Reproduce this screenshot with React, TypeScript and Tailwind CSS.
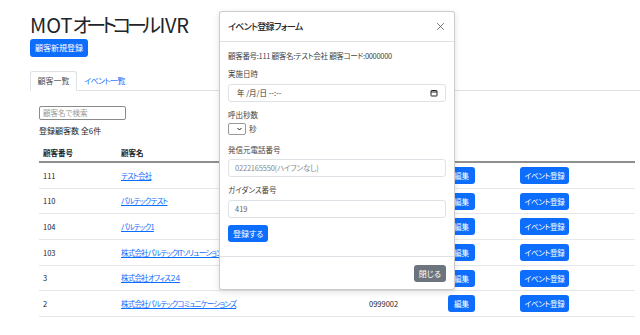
import React from 'react';

interface Customer {
  no: string;
  name: string;
  code: string;
}

const customers: Customer[] = [
  { no: '111', name: 'テスト会社', code: '0000000' },
  { no: '110', name: 'パルテックテスト', code: '0000110' },
  { no: '104', name: 'パルテック1', code: '0000104' },
  { no: '103', name: '株式会社パルテックITソリューションズ', code: '0999003' },
  { no: '3', name: '株式会社オフィス２４', code: '0000003' },
  { no: '2', name: '株式会社パルテックコミュニケーションズ', code: '0999002' },
];

const font = "font-['Noto_Sans_CJK_JP','Noto_Sans',sans-serif] [font-feature-settings:'palt']";

const EventModal: React.FC = () => (
  <div className="absolute left-[219px] top-[11px] w-[236px] h-[279px] bg-white border border-black/20 rounded-[3px] shadow-[0_2px_6px_rgba(0,0,0,0.12)] flex flex-col text-[#212529]">
    {/* header */}
    <div className="h-[30px] shrink-0 px-[8px] flex items-center justify-between border-b border-[#dee2e6]">
      <span className="text-[9px] font-medium tracking-[-0.7px]">イベント登録フォーム</span>
      <svg className="w-[9px] h-[9px] mr-[1px]" viewBox="0 0 16 16" fill="none" stroke="#555" strokeWidth={1.4}>
        <path d="M2 2l12 12M14 2L2 14" />
      </svg>
    </div>
    {/* body */}
    <div className="flex-1 px-[8px] pt-[8px] flex flex-col text-[7.5px] leading-[12px] text-[#444]">
      <p className="tracking-[-0.3px]">顧客番号:111 顧客名:テスト会社 顧客コード:0000000</p>
      <p className="mt-[6px]">実施日時</p>
      <div className="mt-[4px] h-[18px] border border-[#dee2e6] rounded-[3px] flex items-center justify-between pl-[8px] pr-[7px] text-[#333]">
        <span>年 /月/日 --:--</span>
        <svg className="w-[8px] h-[8px]" viewBox="0 0 16 16" fill="none" stroke="#222" strokeWidth={2}>
          <rect x="2" y="3" width="12" height="11" rx="1" />
          <path d="M2 6h12" />
        </svg>
      </div>
      <p className="mt-[7px]">呼出秒数</p>
      <div className="mt-[2px] h-[12px] flex items-center gap-[3px]">
        <div className="w-[18px] h-[12px] border border-[#999] rounded-[2px] flex items-center justify-end pr-[3px]">
          <svg className="w-[5px] h-[4px]" viewBox="0 0 10 6" fill="none" stroke="#222" strokeWidth={2}>
            <path d="M1 1l4 4 4-4" />
          </svg>
        </div>
        <span>秒</span>
      </div>
      <p className="mt-[9px]">発信元電話番号</p>
      <div className="mt-[3px] h-[18px] border border-[#dee2e6] rounded-[3px] flex items-center px-[6px] text-[#888] tracking-[-0.2px]">
        0222165550(ハイフンなし)
      </div>
      <p className="mt-[7px]">ガイダンス番号</p>
      <div className="mt-[4px] h-[18px] border border-[#dee2e6] rounded-[3px] flex items-center px-[6px] text-[#666]">
        419
      </div>
      <div className="mt-[7px] flex">
        <button className="h-[17px] px-[5px] bg-[#0d6efd] text-white rounded-[3px] text-[8px] leading-[17px]">登録する</button>
      </div>
    </div>
    {/* footer */}
    <div className="h-[33px] shrink-0 border-t border-[#dee2e6] flex items-center justify-end px-[8px]">
      <button className="h-[17px] px-[5px] bg-[#6c757d] text-white rounded-[3px] text-[8px] leading-[17px]">閉じる</button>
    </div>
  </div>
);

export default function App() {
  return (
    <div className={`relative w-[640px] h-[335px] overflow-hidden bg-white text-[#212529] ${font}`}>
      <div className="pl-[30px] pt-[11px]">
        <h1 className="text-[20px] leading-[28px] font-normal">
          MOT<span className="tracking-[-4.5px]">オートコール</span><span className="ml-[3px] tracking-[-0.3px]">IVR</span>
        </h1>
        <div className="flex">
          <button className="h-[18px] px-[5px] bg-[#0d6efd] text-white rounded-[3px] text-[8px] leading-[18px]">顧客新規登録</button>
        </div>

        {/* tabs */}
        <div className="mt-[14px] flex items-end border-b border-[#dee2e6] text-[8px]">
          <div className="h-[20px] w-[47px] -mb-[1px] flex items-center justify-center border border-[#dee2e6] border-b-white bg-white rounded-t-[3px] text-[#495057]">
            顧客一覧
          </div>
          <div className="h-[19px] px-[7px] flex items-center text-[#0d6efd] tracking-[-0.6px]">イベント一覧</div>
        </div>

        {/* content */}
        <div className="pl-[9px] pr-[5px]">
          <div className="mt-[15px] w-[87px] h-[14px] border border-[#8a8a8a] rounded-[2px] flex items-center px-[3px] text-[7.5px] text-[#999]">
            顧客名で検索
          </div>
          <p className="mt-[5px] text-[8px] leading-[12px]">登録顧客数 全6件</p>

          <div className="mt-[7px] text-[7.5px]">
            <div className="grid grid-cols-[78px_248px_79px_72px_119px] h-[19px] items-center border-b-2 border-[#8f8f8f] font-bold">
              <span className="pl-[4px]">顧客番号</span>
              <span className="pl-[4px]">顧客名</span>
              <span />
              <span />
              <span />
            </div>
            {customers.map(c => (
              <div key={c.no} className="grid grid-cols-[78px_248px_79px_72px_119px] h-[25.7px] items-center border-b border-[#e5e7eb]">
                <span className="pl-[4px]">{c.no}</span>
                <a className="pl-[4px] text-[#0d6efd] underline whitespace-nowrap overflow-hidden tracking-[-0.8px]">{c.name}</a>
                <span className="pl-[4px]">{c.code}</span>
                <div className="pl-[4px] flex">
                  <button className="h-[17px] w-[27px] bg-[#0d6efd] text-white rounded-[3px] leading-[17px]">編集</button>
                </div>
                <div className="pl-[4px] flex">
                  <button className="h-[17px] w-[49px] bg-[#0d6efd] text-white rounded-[3px] leading-[17px] tracking-[-0.3px]">イベント登録</button>
                </div>
              </div>
            ))}
          </div>
        </div>
      </div>

      <EventModal />
    </div>
  );
}
